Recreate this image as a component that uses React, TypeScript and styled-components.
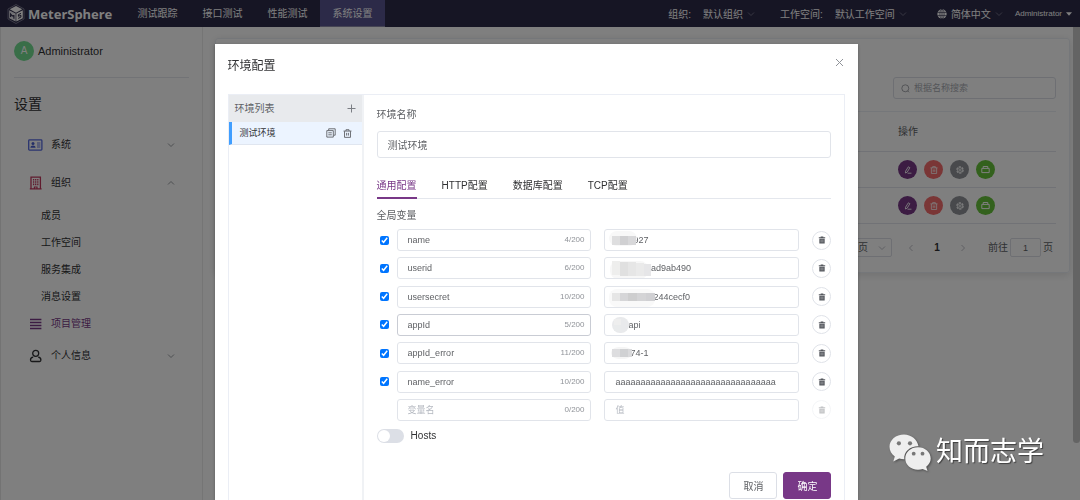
import React, { useState } from 'react';
import styled, { createGlobalStyle, css } from 'styled-components';

const GlobalStyle = createGlobalStyle`
  *, *::before, *::after { box-sizing: border-box; }
  html, body, #root { height: 100%; }
  body {
    margin: 0;
    overflow: hidden;
    background: #fff;
    color: #303133;
    font-family: "Liberation Sans", "Noto Sans CJK SC", sans-serif;
    font-size: 10px;
    line-height: 16px;
  }
  button, input, select { font-family: inherit; color: inherit; margin: 0; }
  button { cursor: pointer; padding: 0; border: 0; background: none; }
  a { color: inherit; text-decoration: none; }
  svg { display: block; flex: none; }
`;

/* ---------- page frame ---------- */

const Page = styled.div`
  display: flex;
  flex-direction: column;
  height: 100%;
`;

const Header = styled.header`
  display: flex;
  align-items: center;
  height: 27px;
  flex: none;
  padding: 0 8px 0 7px;
  background: #2c2a48;
  color: #fff;
`;

const Brand = styled.a`
  display: flex;
  align-items: center;
  gap: 3px;
  width: 118px;
  font: 700 13px/26px "Noto Sans", sans-serif;
`;

const Nav = styled.nav`
  display: flex;
  flex: 1;
  height: 100%;
`;

const NavLink = styled.a<{ $active?: boolean }>`
  width: 65px;
  text-align: center;
  line-height: 27px;
  background: ${(p) => (p.$active ? '#595591' : 'transparent')};
  box-shadow: ${(p) => (p.$active ? 'inset 0 -1px #8c8aa8' : 'none')};
`;

const Picker = styled.button<{ $space: number }>`
  display: flex;
  align-items: center;
  gap: 4px;
  margin-right: ${(p) => p.$space}px;
  font-size: 10px;
`;

const PickerLabel = styled.span`
  margin-right: 8px;
`;

const UserMenu = styled.button`
  display: flex;
  align-items: center;
  gap: 4px;
  font-size: 8px;
`;

const Body = styled.div`
  display: flex;
  flex: 1;
  min-height: 0;
`;

const Sidebar = styled.aside`
  width: 203px;
  flex: none;
  padding: 14px 13px 0 14px;
  border-right: 1px solid #eaeaea;
  box-shadow: inset 1px 0 #e6e6e6;
`;

const Profile = styled.div`
  display: flex;
  align-items: center;
  gap: 4px;
  padding-bottom: 16px;
  border-bottom: 1px solid #e4e7ed;
  font-size: 11px;
  line-height: 20px;
`;

const Avatar = styled.span`
  width: 20px;
  height: 20px;
  border-radius: 50%;
  background: #72dc91;
  color: #fff;
  font-size: 10px;
  text-align: center;
`;

const SideTitle = styled.h1`
  margin: 16px 0 12px;
  font-size: 14px;
  font-weight: 400;
  line-height: 20px;
`;

const MenuRow = styled.a<{ $short?: boolean; $active?: boolean }>`
  display: grid;
  grid-template-columns: 15px 1fr 8px;
  align-items: center;
  gap: 8px;
  height: ${(p) => (p.$short ? 27 : 38)}px;
  padding: 0 14px;
  color: ${(p) => (p.$active ? '#783887' : 'inherit')};
`;

const SubLink = styled.a`
  display: block;
  padding-left: 27px;
  line-height: 27px;
`;

const Content = styled.main`
  flex: 1;
  padding: 11px 3px 0 12px;
`;

const Card = styled.section`
  padding: 38px 13px 15px;
  border: 1px solid #ebeef5;
  border-radius: 3px;
  box-shadow: 0 2px 8px rgba(0, 0, 0, 0.12);
`;

const SearchBox = styled.label`
  display: flex;
  align-items: center;
  gap: 4px;
  width: 163px;
  height: 22px;
  margin: 0 0 12px auto;
  padding: 0 7px;
  border: 1px solid #dcdfe6;
  border-radius: 3px;
  color: #a8abb2;

  input {
    width: 100%;
    padding: 0;
    border: 0;
    outline: 0;
    background: none;
    font-size: 9px;
  }
  input::placeholder { color: #a8abb2; opacity: 1; }
`;

const ProjectTable = styled.table`
  width: 100%;
  border-collapse: collapse;
  border-top: 1px solid #ebeef5;

  th, td {
    height: 36px;
    padding: 0 0 0 7px;
    border-bottom: 1px solid #e2e5ec;
    text-align: left;
  }
  th { height: 40px; color: #606266; font-weight: 400; }
  th:last-child, td:last-child { width: 165px; }
`;

const Actions = styled.div`
  display: flex;
  gap: 7px;
`;

const RoundAction = styled.button<{ $color: string }>`
  display: grid;
  place-items: center;
  width: 19px;
  height: 19px;
  border-radius: 50%;
  background: ${(p) => p.$color};
  color: #fff;
`;

const Pagination = styled.div`
  display: flex;
  justify-content: flex-end;
  align-items: center;
  padding: 14px 3px 0 0;
  color: #606266;

  b { width: 44px; text-align: center; color: #303133; }
`;

const PageSize = styled.label`
  display: flex;
  align-items: center;
  height: 19px;
  margin-right: 15px;
  padding: 0 5px 0 8px;
  border: 1px solid #dcdfe6;
  border-radius: 2px;
  color: #606266;

  select {
    appearance: none;
    width: 44px;
    padding: 0;
    border: 0;
    background: none;
    font-size: 10px;
  }
`;

const Jump = styled.label`
  display: flex;
  align-items: center;
  gap: 2px;
  margin-left: 21px;

  input {
    width: 31px;
    height: 19px;
    padding: 0;
    border: 1px solid #dcdfe6;
    border-radius: 2px;
    background: none;
    font-size: 9px;
    text-align: center;
  }
`;

const ScrollTrack = styled.div`
  width: 7px;
  flex: none;
`;

const ScrollThumb = styled.div`
  height: 88%;
  border-radius: 0 0 4px 4px;
  background: #c8c8c8;
`;

/* ---------- dialog ---------- */

const Overlay = styled.div`
  position: fixed;
  inset: 0;
  display: flex;
  justify-content: center;
  padding: 44px 7px 0 0;
  background: rgba(0, 0, 0, 0.5);
`;

const Dialog = styled.section`
  display: flex;
  flex-direction: column;
  width: 60%;
  padding: 0 13px;
  background: #fff;
  box-shadow: 0 1px 3px rgba(0, 0, 0, 0.3);
`;

const DialogHead = styled.header`
  display: flex;
  justify-content: space-between;
  align-items: center;
  height: 50px;
  padding-bottom: 6px;
  flex: none;

  h2 { margin: 0; font-size: 12px; font-weight: 400; }
  button { color: #909399; padding: 0 1px 7px 0; }
`;

const Panel = styled.div`
  display: flex;
  flex: 1;
  border: 1px solid #ebeef5;
  border-bottom: 0;
`;

const EnvList = styled.div`
  width: 135px;
  flex: none;
  border-right: 2px solid #f0f2f5;
`;

const EnvHead = styled.div`
  display: flex;
  justify-content: space-between;
  align-items: center;
  height: 27px;
  padding: 0 6px;
  background: #e8eaed;
  color: #606266;
`;

const EnvItem = styled.div`
  display: flex;
  align-items: center;
  gap: 7px;
  height: 23px;
  padding: 0 10px 0 8px;
  border-left: 3px solid #409eff;
  border-bottom: 1px solid #e0e6f0;
  background: #ecf4ff;
  color: #606266;

  span { flex: 1; color: #303133; font-size: 9px; }
`;

const Form = styled.form`
  display: flex;
  flex-direction: column;
  flex: 1;
  padding: 12px 13px 0;
  color: #606266;
`;

const outlined = css<{ $focus?: boolean }>`
  border: 1px solid ${(p) => (p.$focus ? '#c9ccd4' : '#e1e4ea')};
  border-radius: 3px;
  background: #fff;
`;

const NameField = styled.label`
  display: grid;
  gap: 8px;

  input {
    ${outlined}
    width: 100%;
    height: 27px;
    padding: 0 10px;
    outline: 0;
    font-size: 10px;
  }
`;

const Tabs = styled.div`
  display: flex;
  gap: 25px;
  margin-top: 13px;
  box-shadow: inset 0 -1px #e4e7ed;
`;

const Tab = styled.button<{ $active?: boolean }>`
  height: 28px;
  border-bottom: 2px solid ${(p) => (p.$active ? '#783887' : 'transparent')};
  color: ${(p) => (p.$active ? '#783887' : '#303133')};
  font-size: 10px;
`;

const SectionLabel = styled.div`
  margin-top: 9px;
`;

const Variables = styled.div`
  display: grid;
  grid-auto-rows: 1fr;
  height: 198px;
  margin-top: 2px;
`;

const VariableRow = styled.div`
  display: grid;
  grid-template-columns: 7px 1fr 1fr 19px;
  column-gap: 13px;
  align-items: center;
`;

const Check = styled.input`
  width: 9px;
  height: 9px;
  margin-left: 3px;
  accent-color: #0075ff;
`;

const Box = styled.label<{ $focus?: boolean }>`
  ${outlined}
  position: relative;
  display: flex;
  align-items: center;
  height: 22px;
  padding: 0 6px 0 10px;
  font-size: 9px;

  input {
    flex: 1;
    min-width: 0;
    padding: 0;
    border: 0;
    outline: 0;
    background: none;
    font-size: 9px;
  }
  input::placeholder { color: #b4b8c0; opacity: 1; }
`;

const Counter = styled.span`
  color: #909399;
  font-size: 8px;
`;

const ValueInput = styled.input<{ $indent: number }>`
  && { padding-left: ${(p) => p.$indent}px; }
`;

const Mask = styled.svg`
  position: absolute;
  left: 2px;
  top: 0;
`;

const RemoveButton = styled.button`
  display: grid;
  place-items: center;
  width: 19px;
  height: 19px;
  border: 1px solid #dfe2e8;
  border-radius: 50%;
  color: #55585e;

  &:disabled { opacity: 0.35; }
`;

const HostsRow = styled.label`
  display: flex;
  align-items: center;
  gap: 7px;
  margin-top: 4px;
  color: #303133;
`;

const Toggle = styled.input`
  appearance: none;
  display: flex;
  align-items: center;
  width: 27px;
  height: 14px;
  padding: 1px;
  border-radius: 7px;
  background: #dcdfe6;

  &::before {
    content: '';
    width: 12px;
    height: 12px;
    border-radius: 50%;
    background: #fff;
  }
  &:checked { justify-content: flex-end; background: #783887; }
`;

const Footer = styled.div`
  display: flex;
  justify-content: flex-end;
  gap: 6px;
  margin-top: 28px;
`;

const FooterButton = styled.button<{ $primary?: boolean }>`
  width: 48px;
  height: 27px;
  border: 1px solid ${(p) => (p.$primary ? '#783887' : '#dcdfe6')};
  border-radius: 3px;
  background: ${(p) => (p.$primary ? '#783887' : '#fff')};
  color: ${(p) => (p.$primary ? '#fff' : '#606266')};
  font-size: 10px;
`;

const Watermark = styled.div`
  position: fixed;
  right: 36px;
  bottom: 29px;
  display: flex;
  align-items: center;
  gap: 5px;
  color: #fff;
  font-size: 27px;
  line-height: 38px;
  text-shadow: 1px 1px 1px rgba(0, 0, 0, 0.5);

  svg { filter: drop-shadow(1px 1px 1px rgba(0, 0, 0, 0.4)); }
`;

/* ---------- icons ---------- */

const chevronPaths = {
  down: 'M1 2.5l3 3 3-3',
  up: 'M1 5.5l3-3 3 3',
  left: 'M5.5 1l-3 3 3 3',
  right: 'M2.5 1l3 3-3 3',
};

const Chevron = ({ dir = 'down', color = '#909399' }: { dir?: keyof typeof chevronPaths; color?: string }) => (
  <svg width="8" height="8" viewBox="0 0 8 8" fill="none" stroke={color} strokeWidth="0.9">
    <path d={chevronPaths[dir]} />
  </svg>
);

const LogoIcon = () => (
  <svg width="18" height="20" viewBox="0 0 18 20">
    <path d="M9 .5l8 4.5v10l-8 4.5L1 15V5z" fill="none" stroke="#77758c" strokeWidth="1" />
    <path d="M9 2l6.300 3.300L9 8.700 2.700 5.300z" fill="#fff" />
    <path d="M2.200 6.200l6.500 3.400v8L2.200 14.200z" fill="#e4e4ea" />
    <path d="M15.800 6.200L9.300 9.600v8l6.500-3.400z" fill="#fff" />
    <path d="M3.600 13V10l1.600 1.900 1.700-.2v3" fill="none" stroke="#2c2a48" strokeWidth="1.100" />
    <path d="M14 9.400l-2.600 1.200v1.700l2.500-1v1.800l-2.700 1.300" fill="none" stroke="#2c2a48" strokeWidth="1" />
  </svg>
);

const GlobeIcon = () => (
  <svg width="10" height="10" viewBox="0 0 10 10">
    <circle cx="5" cy="5" r="4.7" fill="#fff" />
    <g fill="none" stroke="#2c2a48" strokeWidth="0.6">
      <ellipse cx="5" cy="5" rx="2.1" ry="4.7" />
      <path d="M.3 3.5h9.4M.3 6.5h9.4M5 .3v9.4" />
    </g>
  </svg>
);

const CaretIcon = () => (
  <svg width="6" height="4" viewBox="0 0 6 4"><path d="M0 .3h6L3 3.7z" fill="#fff" /></svg>
);

const IdCardIcon = () => (
  <svg width="15" height="12" viewBox="0 0 15 12" fill="none" stroke="#5468e0">
    <rect x=".7" y=".9" width="13.2" height="10.2" rx=".8" strokeWidth="1.300" />
    <circle cx="5" cy="4.400" r="1.500" fill="#4a5fd0" stroke="none" />
    <path d="M2.400 8.800c0-3 5.200-3 5.200 0z" fill="#4a5fd0" stroke="none" />
    <path d="M9 4h3.400M9 6h3.400M9 8h3.400" strokeWidth=".9" />
  </svg>
);

const BuildingIcon = () => (
  <svg width="15" height="14" viewBox="0 0 15 14" fill="none" stroke="#c0365c">
    <path d="M3 13V1.200h9.400V13M1.800 12.800h11.800" strokeWidth="1.300" />
    <path d="M5.600 3v6.800M7.700 3v6.800M9.800 3v6.800" strokeWidth="1.300" strokeDasharray="1.500 .7" />
    <path d="M6.400 13v-2h2.600v2" strokeWidth="1.200" />
  </svg>
);

const ListIcon = () => (
  <svg width="15" height="12" viewBox="0 0 15 12" stroke="#783887" strokeWidth="1.500">
    <path d="M2 1.500h11.400M2 4.500h11.400M2 7.500h11.400M2 10.500h11.400" />
  </svg>
);

const PersonIcon = () => (
  <svg width="15" height="14" viewBox="0 0 15 14" fill="none" stroke="#303133" strokeWidth="1.300">
    <circle cx="7.700" cy="4.300" r="3" />
    <path d="M5.200 8.200C3.200 8.400 2.500 9.400 2.500 11c0 1 .4 1.500 1.300 1.500h7.800c.9 0 1.300-.5 1.300-1.500 0-1.600-.7-2.600-2.700-2.800" />
  </svg>
);

const SearchIcon = () => (
  <svg width="9" height="9" viewBox="0 0 9 9" fill="none" stroke="#909399" strokeWidth=".8">
    <circle cx="4.300" cy="4.300" r="3.500" />
    <path d="M6.600 6.800l1.500 1.500" />
  </svg>
);

const TrashIcon = ({ size = 9 }: { size?: number }) => (
  <svg width={size} height={size} viewBox="0 0 10 10" fill="none" stroke="currentColor" strokeWidth="1">
    <path d="M.6 2.300h8.800M3.300 2.200V.8h3.400v1.400M1.700 2.400v6.900h6.600V2.400M4 4.300v3M6 4.300v3" />
  </svg>
);

const TrashSolidIcon = () => (
  <svg width="8" height="8" viewBox="0 0 8 9">
    <path d="M2.500 .5h3v1H7.600v1.100H.4V1.500h2.100zM1 3h6v5.500H1z" fill="currentColor" />
    <path d="M3 4v3.200M5 4v3.200" stroke="#fff" strokeWidth=".6" opacity=".7" />
  </svg>
);

const CopyIcon = () => (
  <svg width="10" height="10" viewBox="0 0 10 10" fill="none" stroke="currentColor" strokeWidth=".9">
    <path d="M2.700 2.500V.8h6.500v6.400H7.500M.8 2.600h6.500v6.500H.8zM2.300 4.800h3.500M2.300 6.800h3.500" />
  </svg>
);

const PlusIcon = () => (
  <svg width="9" height="9" viewBox="0 0 9 9" stroke="#7b7e84"><path d="M4.500 .5v8M.5 4.500h8" /></svg>
);

const CloseIcon = () => (
  <svg width="9" height="9" viewBox="0 0 9 9" stroke="currentColor"><path d="M1 1l7 7M8 1L1 8" /></svg>
);

const EditIcon = () => (
  <svg width="8" height="8" viewBox="0 0 9 9" fill="none" stroke="currentColor" strokeWidth="1">
    <path d="M4.900 .9l1.700 1-3 5-2 1 .2-2.100zM4 8.100h4.400" />
  </svg>
);

const GearIcon = () => (
  <svg width="8" height="8" viewBox="0 0 9 9" fill="none" stroke="currentColor">
    <circle cx="4.500" cy="4.500" r="3.600" strokeWidth="1.200" strokeDasharray="2.500 1.270" />
    <circle cx="4.500" cy="4.500" r="2.700" strokeWidth=".9" />
    <circle cx="4.500" cy="4.500" r="1" strokeWidth=".8" />
  </svg>
);

const BoxIcon = () => (
  <svg width="9" height="9" viewBox="0 0 9 9" fill="none" stroke="currentColor" strokeWidth="1">
    <path d="M.8 3.400h7.400v4.200H.8zM2.200 3.200V1.500h4.600v1.700" />
  </svg>
);

const WechatIcon = () => (
  <svg width="42" height="37" viewBox="0 0 42 37">
    <path d="M15 .5C6.900 .5.500 6 .500 12.800c0 4 2 7.300 5.300 9.600L4.300 27.500l5.800-3c1.700.5 3.300.7 5.200.7C14.500 17.500 21.500 12 29.500 12.300 28.200 5.500 22.300.5 15 .500z" fill="#eee" />
    <path d="M29 13.300c-7.300 0-12.700 4.900-12.700 11.200s5.400 11.200 12.700 11.200c1.700 0 3.200-.3 4.700-.8l4.800 2.100-1.300-4.300c2.700-2 4.500-4.900 4.500-8.200 0-6.300-5.600-11.200-12.700-11.200z" fill="#eee" />
    <g fill="#777">
      <circle cx="9.900" cy="9.300" r="2.100" /><circle cx="21" cy="9.300" r="2.100" />
      <circle cx="24.700" cy="19.700" r="1.900" /><circle cx="33.500" cy="19.700" r="1.900" />
    </g>
  </svg>
);

/* ---------- data ---------- */

type Cell = [x: number, y: number, w: number, h: number, fill: string];

interface Variable {
  name: string;
  value: string;
  indent?: number;
  focus?: boolean;
  halo?: Cell;
  mask?: Cell[];
}

const variables: Variable[] = [
  {
    name: 'name', value: '927', indent: 18, halo: [2, 1, 28, 15, '#f8f8f8'],
    mask: [[5, 6, 8, 9, '#dededf'], [13, 6, 8, 9, '#d0d0d2'], [21, 6, 8, 9, '#d8d8da']],
  },
  {
    name: 'userid', value: 'fad9ab490', indent: 33, halo: [3, 3, 38, 18, '#f7f7f7'],
    mask: [[5, 3, 8, 14, '#eeeeed'], [13, 4, 8, 14, '#e0e0e0'], [21, 4, 8, 14, '#e6e6e6'], [29, 5, 8, 13, '#eaeaea'], [37, 6, 7, 12, '#e6e6e8']],
  },
  {
    name: 'usersecret', value: '244cecf0', indent: 38, halo: [2, 2, 46, 18, '#f9f9f9'],
    mask: [[5, 6, 8, 8, '#e6e6e6'], [13, 6, 8, 8, '#d6d6d8'], [21, 6, 9, 8, '#cececf'], [30, 6, 9, 8, '#d4d4d6'], [39, 6, 9, 8, '#d0d0d3']],
  },
  {
    name: 'appId', value: 'api', indent: 13, focus: true, halo: [5, 2, 17, 16, '#e9eaec'],
    mask: [[7, 4, 7, 6, '#eeeeee'], [7, 10, 7, 6, '#e9ebec']],
  },
  {
    name: 'appId_error', value: '74-1', indent: 15, halo: [4, 4, 21, 12, '#f5f5f5'],
    mask: [[5, 6, 8, 8, '#dddddf'], [13, 6, 8, 8, '#d0d1d3'], [21, 6, 4, 8, '#dadadc']],
  },
  { name: 'name_error', value: 'a'.repeat(32) },
];

const rowActions = [
  { label: '编辑', color: '#783887', icon: <EditIcon /> },
  { label: '删除', color: '#f56c6c', icon: <TrashIcon size={8} /> },
  { label: '设置', color: '#909399', icon: <GearIcon /> },
  { label: '环境', color: '#67c23a', icon: <BoxIcon /> },
];

const VariableLine = ({ item }: { item?: Variable }) => {
  const [name, setName] = useState(item?.name ?? '');
  const [value, setValue] = useState(item?.value ?? '');
  return (
    <VariableRow>
      {item ? <Check type="checkbox" defaultChecked aria-label={`启用 ${item.name}`} /> : <span />}
      <Box $focus={item?.focus}>
        <input aria-label="变量名" placeholder="变量名" value={name} onChange={(e) => setName(e.target.value)} />
        <Counter>{name.length}/200</Counter>
      </Box>
      <Box>
        <ValueInput
          $indent={item?.indent ?? 0}
          aria-label="值"
          placeholder="值"
          value={value}
          onChange={(e) => setValue(e.target.value)}
        />
        {item?.halo && (
          <Mask width="56" height="20" aria-hidden="true">
            <rect x={item.halo[0]} y={item.halo[1]} width={item.halo[2]} height={item.halo[3]} rx="8" fill={item.halo[4]} />
            {item.mask?.map(([x, y, w, h, fill]) => (
              <rect key={`${x}-${y}`} x={x} y={y} width={w} height={h} fill={fill} />
            ))}
          </Mask>
        )}
      </Box>
      <RemoveButton type="button" aria-label="删除变量" disabled={!item}><TrashSolidIcon /></RemoveButton>
    </VariableRow>
  );
};

export default function App() {
  return (
    <>
      <GlobalStyle />
      <Page>
        <Header>
          <Brand href="#"><LogoIcon />MeterSphere</Brand>
          <Nav>
            <NavLink href="#">测试跟踪</NavLink>
            <NavLink href="#">接口测试</NavLink>
            <NavLink href="#">性能测试</NavLink>
            <NavLink href="#" $active>系统设置</NavLink>
          </Nav>
          <Picker $space={25}><PickerLabel>组织:</PickerLabel>默认组织<Chevron color="#77758c" /></Picker>
          <Picker $space={30}><PickerLabel>工作空间:</PickerLabel>默认工作空间<Chevron color="#77758c" /></Picker>
          <Picker $space={12}><GlobeIcon />简体中文<Chevron color="#77758c" /></Picker>
          <UserMenu>Administrator<CaretIcon /></UserMenu>
        </Header>
        <Body>
          <Sidebar>
            <Profile><Avatar>A</Avatar>Administrator</Profile>
            <SideTitle>设置</SideTitle>
            <MenuRow href="#"><IdCardIcon />系统<Chevron /></MenuRow>
            <MenuRow href="#"><BuildingIcon />组织<Chevron dir="up" /></MenuRow>
            <SubLink href="#">成员</SubLink>
            <SubLink href="#">工作空间</SubLink>
            <SubLink href="#">服务集成</SubLink>
            <SubLink href="#">消息设置</SubLink>
            <MenuRow href="#" $short $active><ListIcon />项目管理</MenuRow>
            <MenuRow href="#"><PersonIcon />个人信息<Chevron /></MenuRow>
          </Sidebar>
          <Content>
            <Card>
              <SearchBox><SearchIcon /><input aria-label="根据名称搜索" placeholder="根据名称搜索" /></SearchBox>
              <ProjectTable>
                <thead><tr><th aria-label="项目" /><th>操作</th></tr></thead>
                <tbody>
                  {[0, 1].map((row) => (
                    <tr key={row}>
                      <td />
                      <td>
                        <Actions>
                          {rowActions.map((a) => (
                            <RoundAction key={a.label} $color={a.color} aria-label={a.label}>{a.icon}</RoundAction>
                          ))}
                        </Actions>
                      </td>
                    </tr>
                  ))}
                </tbody>
              </ProjectTable>
              <Pagination>
                <PageSize>
                  <select aria-label="每页条数"><option>10条/页</option></select>
                  <Chevron color="#b4b8c0" />
                </PageSize>
                <Chevron dir="left" color="#b4b8c0" /><b>1</b><Chevron dir="right" color="#b4b8c0" />
                <Jump>前往<input defaultValue="1" />页</Jump>
              </Pagination>
            </Card>
          </Content>
          <ScrollTrack><ScrollThumb /></ScrollTrack>
        </Body>
      </Page>
      <Overlay>
        <Dialog role="dialog" aria-label="环境配置">
          <DialogHead><h2>环境配置</h2><button aria-label="关闭"><CloseIcon /></button></DialogHead>
          <Panel>
            <EnvList>
              <EnvHead>环境列表<button aria-label="添加"><PlusIcon /></button></EnvHead>
              <EnvItem>
                <span>测试环境</span>
                <button aria-label="复制"><CopyIcon /></button>
                <button aria-label="删除"><TrashIcon /></button>
              </EnvItem>
            </EnvList>
            <Form onSubmit={(e) => e.preventDefault()}>
              <NameField>环境名称<input defaultValue="测试环境" /></NameField>
              <Tabs role="tablist">
                <Tab type="button" role="tab" $active>通用配置</Tab>
                <Tab type="button" role="tab">HTTP配置</Tab>
                <Tab type="button" role="tab">数据库配置</Tab>
                <Tab type="button" role="tab">TCP配置</Tab>
              </Tabs>
              <SectionLabel>全局变量</SectionLabel>
              <Variables>
                {variables.map((v) => <VariableLine key={v.name} item={v} />)}
                <VariableLine />
              </Variables>
              <HostsRow><Toggle type="checkbox" role="switch" />Hosts</HostsRow>
              <Footer>
                <FooterButton type="button">取消</FooterButton>
                <FooterButton type="submit" $primary>确定</FooterButton>
              </Footer>
            </Form>
          </Panel>
        </Dialog>
      </Overlay>
      <Watermark><WechatIcon />知而志学</Watermark>
    </>
  );
}
